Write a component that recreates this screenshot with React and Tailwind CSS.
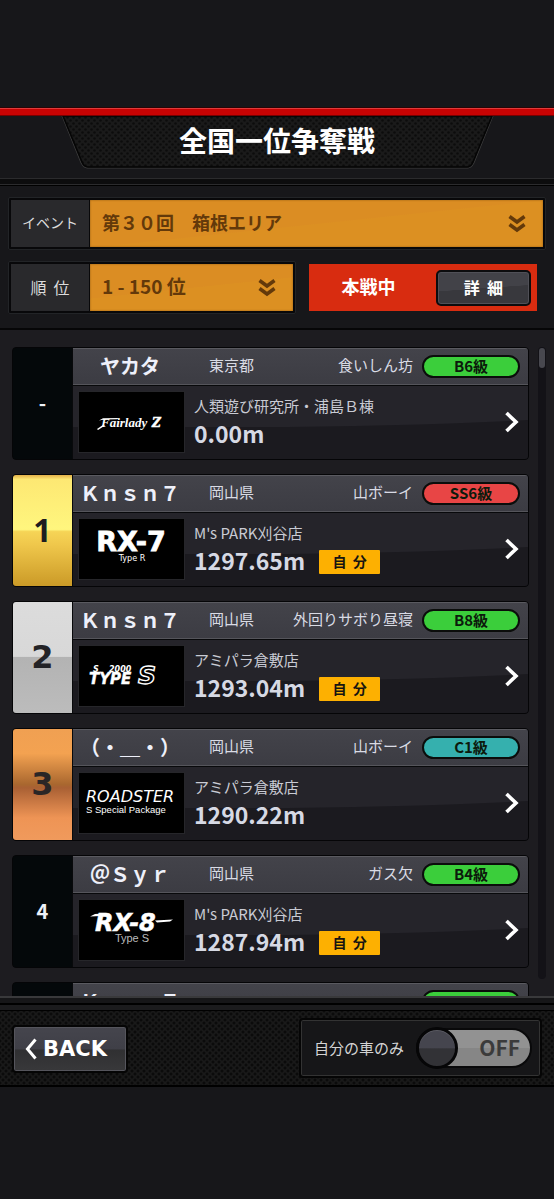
import React, { useState } from "react";

const HOLES =
  "bg-[#191919] bg-[radial-gradient(circle_at_center,#0b0b0b_1.2px,transparent_1.8px),radial-gradient(circle_at_center,#0b0b0b_1.2px,transparent_1.8px)] bg-[size:6px_6px] bg-[position:0_0,3px_3px]";

const RANK_STYLES = {
  gold: "bg-[linear-gradient(#e3b04a_0%,#fde873_4%,#fff67e_49%,#f6d456_51%,#f0c84c_62%,#cb9a27_100%)] text-[#1d1c20]",
  silver: "bg-[linear-gradient(#dcdcdc_0%,#d8d8d8_49%,#b3b3b3_50%,#bcbcbc_100%)] text-[#232326]",
  bronze:
    "bg-[linear-gradient(#f0a052_0%,#f3a251_22%,#a9672f_50%,#a96034_53%,#ee9455_80%,#f09a5c_100%)] text-[#2a2626]",
  plain: "bg-[#04080a] text-[#eef1f8]",
};

const GRADE_COLORS = {
  green: "bg-[#3bce3b]",
  red: "bg-[#e84545]",
  teal: "bg-[#35b0ae]",
};

function FairladyLogo() {
  return (
    <svg viewBox="0 0 105 60" className="h-full w-full" fill="#fff">
      <text x="22" y="35" fontFamily="Liberation Serif, serif" fontSize="13" fontWeight="700" fontStyle="italic">Fairlady</text>
      <text x="73" y="35" fontFamily="DejaVu Serif, serif" fontSize="12" fontWeight="700" fontStyle="italic" stroke="#fff" strokeWidth="0.6">Z</text>
      <path d="M18 37 L24 33 L26 33.500 L19 38 Z M20 28.500 L24 26.300 L40 26 L38 27.200 L25 27.500 Z" />
    </svg>
  );
}

function Rx7Logo() {
  return (
    <svg viewBox="0 0 105 60" className="h-full w-full" fill="#fff">
      <text x="52" y="32" textAnchor="middle" fontFamily="DejaVu Sans, sans-serif" fontSize="27" fontWeight="700" stroke="#fff" strokeWidth="0.8">RX-7</text>
      <text x="53" y="42" textAnchor="middle" fontFamily="Liberation Sans Narrow, DejaVu Sans Condensed, sans-serif" fontSize="9">Type R</text>
    </svg>
  );
}

function S2000Logo() {
  return (
    <svg viewBox="0 0 105 60" className="h-full w-full" fill="#fff">
      <text x="14" y="26" fontFamily="DejaVu Sans, sans-serif" fontSize="8" fontWeight="700" fontStyle="italic">S</text>
      <text x="30" y="26" fontFamily="DejaVu Sans, sans-serif" fontSize="8" fontWeight="700" fontStyle="italic">2000</text>
      <text x="10" y="38" fontFamily="DejaVu Sans, sans-serif" fontSize="15" fontWeight="700" fontStyle="italic" stroke="#fff" strokeWidth="0.4">TYPE</text>
      <text x="59" y="38" fontFamily="DejaVu Sans, sans-serif" fontSize="25" fontWeight="700" fontStyle="italic" fill="#000" stroke="#fff" strokeWidth="1.4">S</text>
    </svg>
  );
}

function RoadsterLogo() {
  return (
    <svg viewBox="0 0 105 60" className="h-full w-full" fill="#fff">
      <text x="7" y="29" fontFamily="DejaVu Sans, sans-serif" fontSize="16" fontStyle="italic">ROADSTER</text>
      <text x="7" y="40" fontFamily="Liberation Sans, sans-serif" fontSize="9.500">S Special Package</text>
    </svg>
  );
}

function Rx8Logo() {
  return (
    <svg viewBox="0 0 105 60" className="h-full w-full" fill="#fff">
      <text x="16" y="31" fontFamily="DejaVu Sans, sans-serif" fontSize="24" fontWeight="700" fontStyle="italic" stroke="#fff" strokeWidth="0.5">RX-8</text>
      <path d="M11 16.500 L16 14 L24 13.500 L22 16 Z M76 20.500 L94 19.500 L91 21.500 L78 22.500 Z" />
      <text x="53" y="42" textAnchor="middle" fontFamily="Liberation Sans, sans-serif" fontSize="11" fill="#bbb">Type S</text>
    </svg>
  );
}

const ENTRIES = [
  { rank: "-", tone: "plain", name: "ヤカタ", area: "東京都", title: "食いしん坊", grade: "B6級", color: "green", shop: "人類遊び研究所・浦島Ｂ棟", distance: "0.00m", own: false, Logo: FairladyLogo },
  { rank: "1", tone: "gold", name: "Ｋｎｓｎ７", area: "岡山県", title: "山ボーイ", grade: "SS6級", color: "red", shop: "M's PARK刈谷店", distance: "1297.65m", own: true, Logo: Rx7Logo },
  { rank: "2", tone: "silver", name: "Ｋｎｓｎ７", area: "岡山県", title: "外回りサボり昼寝", grade: "B8級", color: "green", shop: "アミパラ倉敷店", distance: "1293.04m", own: true, Logo: S2000Logo },
  { rank: "3", tone: "bronze", name: "（・＿・）", area: "岡山県", title: "山ボーイ", grade: "C1級", color: "teal", shop: "アミパラ倉敷店", distance: "1290.22m", own: false, Logo: RoadsterLogo },
  { rank: "4", tone: "plain", name: "＠Ｓｙｒ", area: "岡山県", title: "ガス欠", grade: "B4級", color: "green", shop: "M's PARK刈谷店", distance: "1287.94m", own: true, Logo: Rx8Logo },
  { rank: "", tone: "plain", name: "Ｋｎｓｎ７", area: "", title: "", grade: "", color: "green", shop: "", distance: "", own: false, Logo: () => null },
];

function Header() {
  return (
    <header className="shrink-0">
      <div className="h-2 border-y border-t-[#e03a3a] border-b-[#700] bg-[#c80303] shadow-[0_0_0_1px_#2a0505]" />
      <div className="relative flex h-[62px] items-start justify-center bg-[#17171a]">
        <svg className="absolute inset-0 h-full w-full" viewBox="0 0 554 62" preserveAspectRatio="none" aria-hidden="true">
          <defs>
            <pattern id="holes" width="6" height="6" patternUnits="userSpaceOnUse">
              <rect width="6" height="6" fill="#1a1a1a" />
              <circle cx="1.500" cy="1.500" r="1.300" fill="#0c0c0c" />
              <circle cx="4.500" cy="4.500" r="1.300" fill="#0c0c0c" />
            </pattern>
          </defs>
          <path d="M62 0 L81 47 Q83 52 87 52 L468 52 Q472 52 474 47 L493 0" fill="none" stroke="#3a3a3a" strokeWidth="1" />
          <path d="M63 0 L82 46 Q84 51 88 51 L467 51 Q471 51 473 46 L492 0 Z" fill="url(#holes)" stroke="#050505" strokeWidth="1.500" />
        </svg>
        <h1 className="relative pt-0.5 text-[28px] leading-[44px] font-bold text-white">全国一位争奪戦</h1>
      </div>
      <div className="h-[7px] border-y border-[#2b2b2d] bg-[#0c0c0d] shadow-[0_1px_0_#000]" />
    </header>
  );
}

function DoubleChevron() {
  return (
    <svg className="pointer-events-none absolute top-1/2 right-[17px] h-5 w-[18px] -translate-y-1/2" viewBox="0 0 18 20" fill="none" stroke="#63390a" strokeWidth="3.600" aria-hidden="true">
      <path d="M1.500 2.500 L9 8 L16.500 2.500 M1.500 10.500 L9 16 L16.500 10.500" />
    </svg>
  );
}

function Picker({ id, label, value, labelSize, size, className }) {
  return (
    <div className={"flex h-[53px] rounded-xs border border-[#222427] bg-[#08080a] p-0.5 " + className}>
      <label htmlFor={id} className={"flex w-[78px] shrink-0 items-center justify-center bg-[#29292c] pb-0.5 whitespace-pre text-[#dcdcdc] " + labelSize}>
        {label}
      </label>
      <div className="relative ml-px grow">
        <select id={id} defaultValue={value} className={"h-full w-full appearance-none bg-[linear-gradient(174deg,#db8d23_50%,#dc9022_51%)] pr-10 pb-0.5 pl-3 font-bold text-[#63390a] shadow-[inset_0_0_2px_#8a5510] outline-none " + size}>
          <option>{value}</option>
        </select>
        <DoubleChevron />
      </div>
    </div>
  );
}

function Filters() {
  return (
    <section className="shrink-0 px-2 pt-3 pb-[14px]">
      <Picker id="event" label="イベント" value="第３０回　箱根エリア" labelSize="text-[14px]" size="text-[18px]" className="" />
      <div className="mt-[11px] flex items-center">
        <Picker id="range" label={"順\u00a0\u00a0位"} value="1 - 150 位" labelSize="text-[16px]" size="text-[19px]" className="w-[288px] shrink-0" />
        <div className="mr-[9px] ml-[13px] flex h-[47px] grow items-center justify-between bg-[#d82c10] pr-1.5">
          <span className="grow pr-2 pb-0.5 text-center text-[18px] font-bold text-white">本戦中</span>
          <button className="h-9 w-[95px] shrink-0 rounded-[5px] border-2 border-[#0c0c0e] bg-[linear-gradient(176deg,#424248_50%,#38383d_51%)] pb-0.5 text-[16px] leading-5 font-bold text-white shadow-[inset_0_0_0_1px_#505057]">
            {"詳\u00a0\u00a0細"}
          </button>
        </div>
      </div>
    </section>
  );
}

function RankBadge({ rank, tone }) {
  const face =
    tone === "plain"
      ? "text-[20px] font-bold pb-0.5"
      : tone === "gold"
        ? "font-['Open_Sans'] text-[32px] font-bold pb-0.5"
        : "font-['DejaVu_Sans'] text-[32px] font-bold pb-0.5";
  return (
    <div className={"flex w-[59px] shrink-0 items-center justify-center rounded-l-[3px] leading-8 " + RANK_STYLES[tone] + " " + face}>
      {rank}
    </div>
  );
}

function Entry({ entry }) {
  const { rank, tone, name, area, title, grade, color, shop, distance, own, Logo } = entry;
  return (
    <li className="flex h-[113px] shrink-0 rounded-[4px] border border-[#050507] bg-[#08090b]">
      <RankBadge rank={rank} tone={tone} />
      <div className="ml-px flex min-w-0 grow flex-col overflow-hidden rounded-r-[3px]">
        <div className="flex h-[37px] shrink-0 items-center border-t border-b border-t-[#5a5a60] border-b-[#55555b] bg-linear-to-b from-[#43434a] to-[#3c3c43] pr-2 text-[15px] text-[#d9dbe4]">
          <span className="w-[114px] shrink-0 pb-0.5 text-center text-[20px] leading-8 font-bold whitespace-nowrap text-[#eef0fa]">{name}</span>
          <span className="ml-[22px] shrink-0 pb-0.5">{area}</span>
          <span className="grow pb-0.5 text-right whitespace-nowrap">{title}</span>
          <span className={"ml-[9px] flex h-[23px] w-[98px] shrink-0 items-center justify-center rounded-full border-2 border-[#0b0d0b] pb-px text-[15px] leading-5 font-bold text-[#0c1a0c] " + GRADE_COLORS[color]}>
            {grade}
          </span>
        </div>
        <div className="relative mt-px grow bg-[#1b1a1f]">
          <svg className="absolute inset-0 h-full w-full" viewBox="0 0 455 73" preserveAspectRatio="none" aria-hidden="true">
            <path d="M0 0 H455 V34 Q300 42 111 41 H0 Z" fill="#25242a" />
          </svg>
          <div className="relative flex h-full items-center pr-2 pb-0.5 pl-[5px]">
            <div className="h-[62px] w-[107px] shrink-0 border border-[#26262a] bg-black">
              <Logo />
            </div>
            <div className="ml-[9px] grow">
              <p className="text-[15px] leading-[22px] text-[#c9cbd4]">{shop}</p>
              <div className="flex items-center gap-[14px]">
                <span className="text-[23px] leading-8 font-bold text-[#d6d9e4]">{distance}</span>
                {own && (
                  <span className="mt-1 flex h-6 w-[61px] items-center justify-center rounded-[1px] bg-[#fdb001] text-[14px] font-bold text-[#171410]">
                    {"自\u00a0\u00a0分"}
                  </span>
                )}
              </div>
            </div>
            <button aria-label="詳細を見る" className="shrink-0">
              <svg className="h-6 w-4" viewBox="0 0 16 24" fill="none" stroke="#fff" strokeWidth="3.600" aria-hidden="true">
                <path d="M2.500 3 L12 12 L2.500 21" />
              </svg>
            </button>
          </div>
        </div>
      </div>
    </li>
  );
}

function Ranking() {
  return (
    <main className="flex min-h-0 grow overflow-hidden border-t-2 border-[#060607] bg-[#1d1c20] pt-[17px] pr-2 pl-3">
      <ul className="flex min-w-0 grow flex-col gap-[14px]">
        {ENTRIES.map((entry, i) => (
          <Entry key={i} entry={entry} />
        ))}
      </ul>
      <div className="mb-[17px] ml-[9px] w-2 shrink-0 rounded-full bg-[#131217] p-px">
        <div className="h-5 rounded-full bg-[#48484f]" />
      </div>
    </main>
  );
}

function Footer() {
  const [on, setOn] = useState(false);
  return (
    <footer className="shrink-0">
      <div className="h-[9px] border-t-2 border-b-2 border-t-[#39393b] border-b-black bg-[#161618]" />
      <div className="h-[6px] border-b border-black bg-[#1b1b1d]" />
      <div className={"flex h-[76px] items-center justify-between border-b-2 border-black pr-3 pl-3 " + HOLES}>
        <button className="mt-0.5 flex h-12 w-[116px] items-center justify-center gap-1.5 rounded-[4px] border-2 border-[#050505] bg-[linear-gradient(#45454d_0%,#3f3f47_50%,#303032_52%,#38383a_100%)] pr-2 text-white shadow-[inset_0_0_0_1px_#55555c]">
          <svg className="h-6 w-3 shrink-0" viewBox="0 0 12 24" fill="none" stroke="#fff" strokeWidth="3" aria-hidden="true">
            <path d="M10.500 2.500 L2.500 12 L10.500 21.500" />
          </svg>
          <span className="font-['DejaVu_Sans'] text-[21px] leading-6 font-bold">BACK</span>
        </button>
        <div className="flex h-[60px] items-center rounded-[4px] border-2 border-[#050505] bg-[#161618] pr-2 pl-[13px] shadow-[inset_0_0_0_1px_#333]">
          <label htmlFor="own" className="text-[15px] text-[#d4d4d4]">自分の車のみ</label>
          <span className="relative ml-[12px] flex h-10 w-[116px] items-center justify-end rounded-full border-2 border-[#09090a] bg-[linear-gradient(#929292_50%,#868686_51%)] pr-[10px] text-[21px] font-bold text-[#3b3b3b]">
            {on ? "ON" : "OFF"}
            <span className="absolute -top-[3px] -left-0.5 h-[42px] w-[42px] rounded-full border-[3px] border-[#060607] bg-[linear-gradient(#45454e_50%,#323236_52%)] shadow-[inset_0_1px_0_#5c5c64]" />
            <input id="own" type="checkbox" role="switch" checked={on} onChange={(e) => setOn(e.target.checked)} className="absolute inset-0 h-full w-full cursor-pointer opacity-0" />
          </span>
        </div>
      </div>
    </footer>
  );
}

export default function App() {
  return (
    <div className="flex h-screen flex-col bg-[#17171a] pt-[108px] pb-[112px] font-['Noto_Sans_CJK_JP','Noto_Sans',sans-serif]">
      <Header />
      <Filters />
      <Ranking />
      <Footer />
    </div>
  );
}
